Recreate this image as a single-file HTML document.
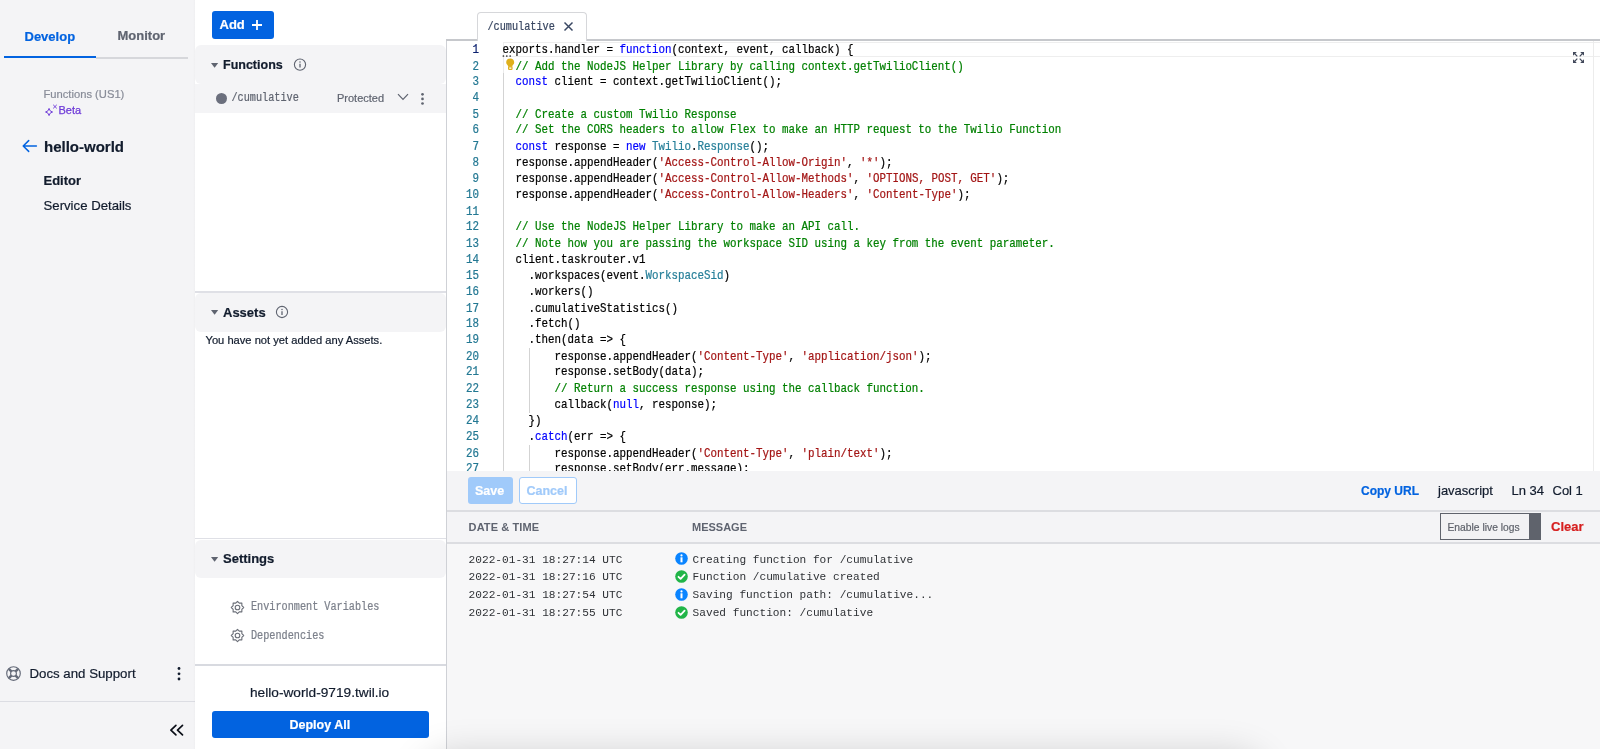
<!DOCTYPE html>
<html><head><meta charset="utf-8">
<style>
*{margin:0;padding:0;box-sizing:border-box}
html,body{width:1600px;height:749px;overflow:hidden;background:#fff;font-family:"Liberation Sans",sans-serif;color:#121c2d}
.a{position:absolute;white-space:nowrap;line-height:1}
.b{font-weight:bold}
.m{font-family:"Liberation Mono",monospace}
#side{position:absolute;left:0;top:0;width:195px;height:749px;background:#f4f4f6}
#mid{position:absolute;left:195.2px;top:0;width:252px;height:749px;background:#fff}
.hdr{position:absolute;left:195px;width:251px;background:#f4f4f6;border-radius:6px}
.tri{position:absolute;width:0;height:0;border-left:3.8px solid transparent;border-right:3.8px solid transparent;border-top:5px solid #5f6470}
.div{position:absolute;background:#e1e3ea}
pre.a{white-space:pre}
.kw{color:#0000ff}.cm{color:#008000}.st{color:#a31515}.ty{color:#267f99}
</style></head><body><div id="root" style="position:absolute;left:0;top:0;width:1600px;height:749px;will-change:transform;-webkit-text-stroke-width:0.2px">

<!-- SIDEBAR -->
<div id="side">
  <div class="a b" style="left:24.5px;top:29.6px;font-size:13px;color:#0263e0">Develop</div>
  <div class="a b" style="left:117.5px;top:29.3px;font-size:13px;color:#5f6470">Monitor</div>
  <div class="div" style="left:96px;top:57px;width:92px;height:1.6px;background:#d6d7db"></div>
  <div class="div" style="left:4px;top:55.5px;width:92px;height:2.3px;background:#0263e0"></div>

  <div class="a" style="left:43.5px;top:88.5px;font-size:11.2px;color:#888c98">Functions (US1)</div>
  <div class="a" style="left:58.5px;top:105.2px;font-size:11px;color:#6e3ad8;-webkit-text-stroke:0.25px #6e3ad8">Beta</div>
  <svg class="a" style="left:44px;top:103px" width="14" height="14" viewBox="0 0 14 14"><path d="M5.05 5.4 Q5.5 8.5 8.6 9 Q5.5 9.5 5.05 12.6 Q4.6 9.5 1.5 9 Q4.6 8.5 5.05 5.4 Z" fill="none" stroke="#6e3ad8" stroke-width="0.95" stroke-linejoin="round"/><path d="M9.2 1.8 L12.8 5.4 M12.8 1.8 L9.2 5.4" stroke="#6e3ad8" stroke-width="0.95"/></svg>

  <svg class="a" style="left:21px;top:139.4px" width="17" height="14" viewBox="0 0 17 14"><path d="M7.7 1.6 L2.2 7 L7.7 12.4 M2.2 7 H15.4" fill="none" stroke="#0263e0" stroke-width="1.5" stroke-linecap="round" stroke-linejoin="round"/></svg>
  <div class="a b" style="left:44px;top:139.2px;font-size:15px;color:#121c2d">hello-world</div>
  <div class="a b" style="left:43.5px;top:174px;font-size:13px;color:#121c2d">Editor</div>
  <div class="a" style="left:43.5px;top:198.8px;font-size:13.2px;color:#121c2d">Service Details</div>

  <svg class="a" style="left:6px;top:666px" width="15" height="15" viewBox="0 0 15 15"><circle cx="7.5" cy="7.5" r="6.8" fill="none" stroke="#646a78" stroke-width="1.15"/><circle cx="7.5" cy="7.5" r="2.9" fill="none" stroke="#646a78" stroke-width="1.1"/><path d="M9.62 9.62L12.17 12.17M5.38 9.62L2.83 12.17M5.38 5.38L2.83 2.83M9.62 5.38L12.17 2.83" stroke="#646a78" stroke-width="2.5"/></svg>
  <div class="a" style="left:29.5px;top:666.5px;font-size:13.25px;color:#121c2d">Docs and Support</div>
  <svg class="a" style="left:176px;top:666px" width="6" height="16" viewBox="0 0 6 16"><circle cx="3" cy="2.5" r="1.4" fill="#121c2d"/><circle cx="3" cy="7.8" r="1.4" fill="#121c2d"/><circle cx="3" cy="13" r="1.4" fill="#121c2d"/></svg>
  <div class="div" style="left:0;top:700.5px;width:195px;height:1.5px;background:#dcdde3"></div>
  <svg class="a" style="left:169.3px;top:724px" width="16" height="13" viewBox="0 0 16 13"><path d="M6.9 1.4 L1.9 6.1 L6.9 10.8 M13.5 1.4 L8.5 6.1 L13.5 10.8" fill="none" stroke="#0b0f18" stroke-width="1.7" stroke-linecap="round" stroke-linejoin="round"/></svg>
</div>

<div class="a" style="left:193px;top:0;width:2.2px;height:749px;background:linear-gradient(90deg,rgba(0,0,0,0),rgba(0,0,0,0.018))"></div>
<!-- MIDDLE PANEL -->
<div id="mid"></div>
<div class="a" style="left:212px;top:11.4px;width:62px;height:27.2px;background:#0263e0;border-radius:3px"></div>
<div class="a b" style="left:219.5px;top:18.4px;font-size:13px;color:#fff">Add</div>
<svg class="a" style="left:251.2px;top:18.8px" width="12" height="12" viewBox="0 0 12 12"><path d="M6 1 V11 M1 6 H11" stroke="#fff" stroke-width="1.8"/></svg>

<div class="hdr" style="top:44.8px;height:39px"></div>
<div class="a" style="left:195px;top:83.8px;width:251px;height:29.4px;background:#f4f4f6"></div>
<svg class="a" style="left:210.9px;top:62.7px" width="8" height="6" viewBox="0 0 8 6"><path d="M0 0H7.2L3.6 4.8Z" fill="#5f6470"/></svg>
<div class="a b" style="left:223px;top:59px;font-size:12.5px;color:#121c2d">Functions</div>
<svg class="a" style="left:293px;top:58px" width="14" height="14" viewBox="0 0 14 14"><circle cx="7" cy="6.6" r="5.6" fill="none" stroke="#5f6470" stroke-width="1.1"/><path d="M7 5.8 V9.6" stroke="#5f6470" stroke-width="1.3"/><circle cx="7" cy="4" r="0.75" fill="#5f6470"/></svg>
<div class="a" style="left:216px;top:92.8px;width:11px;height:11px;border-radius:50%;background:#6b6f7d"></div>
<div class="a m" style="left:231.5px;top:94.4px;font-size:10.2px;color:#5f6470;transform:scaleY(1.2);transform-origin:0 7.82px">/cumulative</div>
<div class="a" style="left:337px;top:92.7px;font-size:11px;color:#5f6470">Protected</div>
<svg class="a" style="left:397px;top:93px" width="12" height="8" viewBox="0 0 12 8"><path d="M1 1.2 L6 6.5 L11 1.2" fill="none" stroke="#5f6470" stroke-width="1.2"/></svg>
<svg class="a" style="left:420.2px;top:92px" width="5" height="14" viewBox="0 0 5 14"><circle cx="2.5" cy="2.3" r="1.35" fill="#5f6470"/><circle cx="2.5" cy="6.9" r="1.35" fill="#5f6470"/><circle cx="2.5" cy="11.5" r="1.35" fill="#5f6470"/></svg>

<div class="div" style="left:195px;top:291px;width:251px;height:1.5px;background:#dfe0e6"></div>
<div class="hdr" style="top:293.4px;height:38.4px"></div>
<svg class="a" style="left:210.9px;top:309.9px" width="8" height="6" viewBox="0 0 8 6"><path d="M0 0H7.2L3.6 4.8Z" fill="#5f6470"/></svg>
<div class="a b" style="left:223px;top:305.9px;font-size:13px;color:#121c2d">Assets</div>
<svg class="a" style="left:275px;top:305px" width="14" height="14" viewBox="0 0 14 14"><circle cx="7" cy="7" r="5.6" fill="none" stroke="#5f6470" stroke-width="1.1"/><path d="M7 6.2 V10" stroke="#5f6470" stroke-width="1.3"/><circle cx="7" cy="4.4" r="0.75" fill="#5f6470"/></svg>
<div class="a" style="left:205.5px;top:335.2px;font-size:11.15px;color:#121c2d">You have not yet added any Assets.</div>

<div class="div" style="left:195px;top:537.8px;width:251px;height:1.5px;background:#dfe0e6"></div>
<div class="hdr" style="top:539.6px;height:38.4px"></div>
<svg class="a" style="left:210.9px;top:556.9px" width="8" height="6" viewBox="0 0 8 6"><path d="M0 0H7.2L3.6 4.8Z" fill="#5f6470"/></svg>
<div class="a b" style="left:223px;top:552.3px;font-size:13px;color:#121c2d">Settings</div>
<svg class="a" style="left:230.1px;top:599.8px" width="15" height="15" viewBox="0 0 15 15"><path d="M7.50 1.30 L9.30 3.16 L11.88 3.12 L11.84 5.70 L13.70 7.50 L11.84 9.30 L11.88 11.88 L9.30 11.84 L7.50 13.70 L5.70 11.84 L3.12 11.88 L3.16 9.30 L1.30 7.50 L3.16 5.70 L3.12 3.12 L5.70 3.16Z" fill="none" stroke="#6b6f78" stroke-width="1.1" stroke-linejoin="round"/><circle cx="7.5" cy="7.5" r="2.3" fill="none" stroke="#6b6f78" stroke-width="1.1"/></svg>
<div class="a m" style="left:251px;top:603px;font-size:10.2px;color:#7c808b;transform:scaleY(1.2);transform-origin:0 7.82px">Environment Variables</div>
<svg class="a" style="left:230.1px;top:628.4px" width="15" height="15" viewBox="0 0 15 15"><path d="M7.50 1.30 L9.30 3.16 L11.88 3.12 L11.84 5.70 L13.70 7.50 L11.84 9.30 L11.88 11.88 L9.30 11.84 L7.50 13.70 L5.70 11.84 L3.12 11.88 L3.16 9.30 L1.30 7.50 L3.16 5.70 L3.12 3.12 L5.70 3.16Z" fill="none" stroke="#6b6f78" stroke-width="1.1" stroke-linejoin="round"/><circle cx="7.5" cy="7.5" r="2.3" fill="none" stroke="#6b6f78" stroke-width="1.1"/></svg>
<div class="a m" style="left:251px;top:631.8px;font-size:10.2px;color:#7c808b;transform:scaleY(1.2);transform-origin:0 7.82px">Dependencies</div>

<div class="div" style="left:195px;top:664.3px;width:251px;height:1.5px;background:#d8dae0"></div>
<div class="a" style="left:250px;top:685.5px;font-size:13.7px;color:#121c2d">hello-world-9719.twil.io</div>
<div class="a" style="left:212px;top:711.4px;width:216.7px;height:26.3px;background:#0263e0;border-radius:3px"></div>
<div class="a b" style="left:289.5px;top:719px;font-size:12.5px;color:#fff">Deploy All</div>

<!-- EDITOR -->
<div class="a" style="left:447px;top:0;width:1153px;height:749px;background:#fff"></div>
<div class="a" style="left:446px;top:40px;width:1.2px;height:709px;background:#cfd1d6"></div>
<div class="a" style="left:446px;top:39.3px;width:1154px;height:1.8px;background:#c6c8cc"></div>
<div class="a" style="left:477px;top:12.3px;width:109.5px;height:29.2px;background:#fff;border:1.2px solid #d6d7da;border-bottom:none;border-radius:4px 4px 0 0"></div>
<div class="a m" style="left:487.5px;top:22.6px;font-size:10.2px;color:#394762;transform:scaleY(1.2);transform-origin:0 7.82px">/cumulative</div>
<svg class="a" style="left:562.5px;top:21px" width="11" height="11" viewBox="0 0 11 11"><path d="M1.5 1.5 L9.5 9.5 M9.5 1.5 L1.5 9.5" stroke="#394762" stroke-width="1.5"/></svg>

<div id="code" class="a" style="left:447px;top:41px;width:1153px;height:429.7px;overflow:hidden">
  <div class="a" style="left:56px;top:0.5px;width:1097px;height:15px;border-top:1.5px solid #eeeeee;border-bottom:1.5px solid #eeeeee;border-left:1px solid #eeeeee"></div>
  <div class="a" style="left:56px;top:16px;width:1px;height:16px;background:#ececec"></div>
  <div class="a" style="left:56px;top:32px;width:1px;height:404px;background:#d3d3d3"></div>
  <div class="a" style="left:82px;top:307px;width:1px;height:64.5px;background:#d3d3d3"></div>
  <div class="a" style="left:82px;top:404px;width:1px;height:40px;background:#d3d3d3"></div>
  <div class="a" style="left:1146px;top:0;width:1px;height:430px;background:#ececec"></div>
  <svg class="a" style="left:55px;top:13.6px" width="12" height="2" viewBox="0 0 12 2"><circle cx="1.4" cy="1" r="0.85" fill="#2a2a2a"/><circle cx="4.8" cy="1" r="0.85" fill="#2a2a2a"/><circle cx="8.2" cy="1" r="0.85" fill="#2a2a2a"/></svg>
  <pre class="a m" id="nums" style="left:0;top:0.6px;width:32px;text-align:right;font-size:10.84px;line-height:14.673px;transform:scaleY(1.1);transform-origin:0 0;color:#237893"><span style="color:#0b216f">1</span>
2
3
4
5
6
7
8
9
10
11
12
13
14
15
16
17
18
19
20
21
22
23
24
25
26
27
28</pre>
  <pre class="a m" id="src" style="left:55.5px;top:0.6px;font-size:10.84px;line-height:14.673px;transform:scaleY(1.1);transform-origin:0 0;color:#000">exports.handler = <span class="kw">function</span>(context, event, callback) {
  <span class="cm">// Add the NodeJS Helper Library by calling context.getTwilioClient()</span>
  <span class="kw">const</span> client = context.getTwilioClient();

  <span class="cm">// Create a custom Twilio Response</span>
  <span class="cm">// Set the CORS headers to allow Flex to make an HTTP request to the Twilio Function</span>
  <span class="kw">const</span> response = <span class="kw">new</span> <span class="ty">Twilio</span>.<span class="ty">Response</span>();
  response.appendHeader(<span class="st">&#x27;Access-Control-Allow-Origin&#x27;</span>, <span class="st">&#x27;*&#x27;</span>);
  response.appendHeader(<span class="st">&#x27;Access-Control-Allow-Methods&#x27;</span>, <span class="st">&#x27;OPTIONS, POST, GET&#x27;</span>);
  response.appendHeader(<span class="st">&#x27;Access-Control-Allow-Headers&#x27;</span>, <span class="st">&#x27;Content-Type&#x27;</span>);

  <span class="cm">// Use the NodeJS Helper Library to make an API call.</span>
  <span class="cm">// Note how you are passing the workspace SID using a key from the event parameter.</span>
  client.taskrouter.v1
    .workspaces(event.<span class="ty">WorkspaceSid</span>)
    .workers()
    .cumulativeStatistics()
    .fetch()
    .then(data =&gt; {
        response.appendHeader(<span class="st">&#x27;Content-Type&#x27;</span>, <span class="st">&#x27;application/json&#x27;</span>);
        response.setBody(data);
        <span class="cm">// Return a success response using the callback function.</span>
        callback(<span class="kw">null</span>, response);
    })
    .<span class="kw">catch</span>(err =&gt; {
        response.appendHeader(<span class="st">&#x27;Content-Type&#x27;</span>, <span class="st">&#x27;plain/text&#x27;</span>);
        response.setBody(err.message);
        callback(<span class="kw">null</span>, response);</pre>
  <svg class="a" style="left:1126px;top:10.8px" width="11" height="11" viewBox="0 0 11 11"><g fill="#41485a" stroke="none"><path d="M0 0H3.8L0 3.8Z"/><path d="M11 0H7.2L11 3.8Z"/><path d="M0 11H3.8L0 7.2Z"/><path d="M11 11H7.2L11 7.2Z"/></g><g stroke="#41485a" stroke-width="1.15"><path d="M1.5 1.5L4.3 4.3M9.5 1.5L6.7 4.3M1.5 9.5L4.3 6.7M9.5 9.5L6.7 6.7"/></g></svg>
  <svg class="a" style="left:58.8px;top:16.6px" width="9" height="13" viewBox="0 0 9 13"><path d="M4.2 0.6C1.9 0.6 0.2 2.2 0.2 4.3c0 1.7 1.1 2.6 1.9 3.6V8.8h4.2V7.9C7.1 6.9 8.2 6 8.2 4.3c0-2.1-1.7-3.7-4-3.7z" fill="#dfb01c"/><rect x="2.6" y="8.8" width="3.4" height="2.6" rx="0.6" fill="none" stroke="#dfb01c" stroke-width="1.2"/></svg>
</div>


<!-- TOOLBAR -->
<div class="a" style="left:447px;top:470.7px;width:1153px;height:40px;background:#f4f4f6"></div>
<div class="a" style="left:447px;top:510px;width:1153px;height:2px;background:#dcdde1"></div>
<div class="a" style="left:467.6px;top:477.2px;width:45.7px;height:26.6px;background:#a0cafa;border-radius:3px"></div>
<div class="a b" style="left:475px;top:484.6px;font-size:12.5px;color:#fff">Save</div>
<div class="a" style="left:518.7px;top:477.2px;width:58.2px;height:26.6px;background:#fff;border:1px solid #a0cafa;border-radius:3px"></div>
<div class="a b" style="left:526.5px;top:484.6px;font-size:12.5px;color:#a0cafa">Cancel</div>
<div class="a b" style="left:1361px;top:485px;font-size:12px;color:#0263e0">Copy URL</div>
<div class="a" style="left:1438px;top:484.2px;font-size:13px;color:#121c2d">javascript</div>
<div class="a" style="left:1511.5px;top:484.2px;font-size:13px;color:#121c2d">Ln 34</div>
<div class="a" style="left:1552.5px;top:484.2px;font-size:13px;color:#121c2d">Col 1</div>

<!-- LOG HEADER -->
<div class="a" style="left:447px;top:512px;width:1153px;height:30px;background:#f4f4f6"></div>
<div class="a" style="left:447px;top:542px;width:1153px;height:1.7px;background:#dcdde1"></div>
<div class="a" style="left:468.6px;top:521.6px;font-size:11px;color:#5f6470;font-weight:bold;letter-spacing:0.1px;-webkit-text-stroke-width:0">DATE &amp; TIME</div>
<div class="a" style="left:692px;top:521.6px;font-size:11px;color:#5f6470;font-weight:bold;-webkit-text-stroke-width:0">MESSAGE</div>
<div class="a" style="left:1440.3px;top:513px;width:100.4px;height:26.5px;border:1.3px solid #5f636c;background:#f2f2f4"></div>
<div class="a" style="left:1528.5px;top:513px;width:12.2px;height:26.5px;background:#5f636c"></div>
<div class="a" style="left:1447.5px;top:522.7px;font-size:10.3px;color:#5f636c">Enable live logs</div>
<div class="a b" style="left:1551px;top:520px;font-size:13px;color:#d61f1f">Clear</div>

<!-- LOGS -->
<div class="a" style="left:447px;top:543.7px;width:1153px;height:206px;background:#f7f7f8"></div>
<div class="a m" style="left:468.6px;top:554.7px;font-size:11.15px;color:#2e3135;-webkit-text-stroke-width:0;transform:scaleY(1.05);transform-origin:0 8.55px">2022-01-31 18:27:14 UTC</div>
<svg class="a" style="left:674.7px;top:552.3px" width="13" height="13" viewBox="0 0 13 13"><circle cx="6.5" cy="6.5" r="6.3" fill="#0a84ff"/><rect x="5.5" y="5.3" width="2" height="5" fill="#fff"/><circle cx="6.5" cy="3.4" r="1.1" fill="#fff"/></svg>
<div class="a m" style="left:692.6px;top:554.7px;font-size:11.15px;color:#2e3135;-webkit-text-stroke-width:0;transform:scaleY(1.05);transform-origin:0 8.55px">Creating function for /cumulative</div>
<div class="a m" style="left:468.6px;top:572.4px;font-size:11.15px;color:#2e3135;-webkit-text-stroke-width:0;transform:scaleY(1.05);transform-origin:0 8.55px">2022-01-31 18:27:16 UTC</div>
<svg class="a" style="left:674.7px;top:570.0px" width="13" height="13" viewBox="0 0 13 13"><circle cx="6.5" cy="6.5" r="6.3" fill="#21b548"/><path d="M3.5 6.8 L5.6 8.9 L9.6 4.6" fill="none" stroke="#fff" stroke-width="1.8" stroke-linecap="round" stroke-linejoin="round"/></svg>
<div class="a m" style="left:692.6px;top:572.4px;font-size:11.15px;color:#2e3135;-webkit-text-stroke-width:0;transform:scaleY(1.05);transform-origin:0 8.55px">Function /cumulative created</div>
<div class="a m" style="left:468.6px;top:590.4px;font-size:11.15px;color:#2e3135;-webkit-text-stroke-width:0;transform:scaleY(1.05);transform-origin:0 8.55px">2022-01-31 18:27:54 UTC</div>
<svg class="a" style="left:674.7px;top:588.0px" width="13" height="13" viewBox="0 0 13 13"><circle cx="6.5" cy="6.5" r="6.3" fill="#0a84ff"/><rect x="5.5" y="5.3" width="2" height="5" fill="#fff"/><circle cx="6.5" cy="3.4" r="1.1" fill="#fff"/></svg>
<div class="a m" style="left:692.6px;top:590.4px;font-size:11.15px;color:#2e3135;-webkit-text-stroke-width:0;transform:scaleY(1.05);transform-origin:0 8.55px">Saving function path: /cumulative...</div>
<div class="a m" style="left:468.6px;top:608.1px;font-size:11.15px;color:#2e3135;-webkit-text-stroke-width:0;transform:scaleY(1.05);transform-origin:0 8.55px">2022-01-31 18:27:55 UTC</div>
<svg class="a" style="left:674.7px;top:605.7px" width="13" height="13" viewBox="0 0 13 13"><circle cx="6.5" cy="6.5" r="6.3" fill="#21b548"/><path d="M3.5 6.8 L5.6 8.9 L9.6 4.6" fill="none" stroke="#fff" stroke-width="1.8" stroke-linecap="round" stroke-linejoin="round"/></svg>
<div class="a m" style="left:692.6px;top:608.1px;font-size:11.15px;color:#2e3135;-webkit-text-stroke-width:0;transform:scaleY(1.05);transform-origin:0 8.55px">Saved function: /cumulative</div>

<div class="a" style="left:425px;top:758px;width:837px;height:60px;border-radius:30px;box-shadow:0 0 36px 4px rgba(0,0,0,0.17)"></div>

</div></body></html>
